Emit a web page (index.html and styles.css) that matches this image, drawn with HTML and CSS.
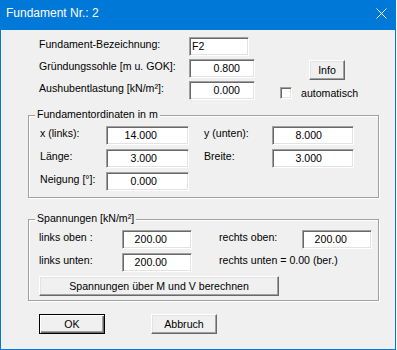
FILE: index.html
```html
<!DOCTYPE html>
<html lang="de">
<head>
    <meta charset="UTF-8">
    <title>Fundament Nr.: 2</title>
    <link rel="stylesheet" href="styles.css">
</head>
<body>
    <div class="window">
        <div class="titlebar">
            <span class="title">Fundament Nr.: 2</span>
            <svg class="close" width="11" height="11" viewBox="0 0 11 11">
                <path d="M0.5 0.5 L10.5 10.5 M10.5 0.5 L0.5 10.5" stroke="#fff" stroke-width="1" fill="none"/>
            </svg>
        </div>
        <div class="content">
            <!-- Kopfdaten -->
            <div class="head">
                <div class="fields">
                    <span class="lbl">Fundament-Bezeichnung:</span>
                    <div class="field txt short">F2</div>
                    <span class="lbl">Gründungssohle [m u. GOK]:</span>
                    <div class="field num top">0.800</div>
                    <span class="lbl">Aushubentlastung [kN/m²]:</span>
                    <div class="field num top">0.000</div>
                </div>
                <div class="side">
                    <button class="btn info">Info</button>
                    <div class="check">
                        <span class="box"></span>
                        <span>automatisch</span>
                    </div>
                </div>
            </div>

            <!-- Koordinaten -->
            <div class="group coords">
                <span class="legend">Fundamentordinaten in m</span>
                <div class="grid">
                    <span class="lbl">x (links):</span>
                    <div class="field num mid">14.000</div>
                    <span class="lbl second">y (unten):</span>
                    <div class="field num mid">8.000</div>
                    <span class="lbl">Länge:</span>
                    <div class="field num mid">3.000</div>
                    <span class="lbl second">Breite:</span>
                    <div class="field num mid">3.000</div>
                    <span class="lbl">Neigung [°]:</span>
                    <div class="field num mid">0.000</div>
                </div>
            </div>

            <!-- Spannungen -->
            <div class="group stress">
                <span class="legend">Spannungen [kN/m²]</span>
                <div class="grid">
                    <span class="lbl">links oben :</span>
                    <div class="field num low">200.00</div>
                    <span class="lbl second">rechts oben:</span>
                    <div class="field num low">200.00</div>
                    <span class="lbl">links unten:</span>
                    <div class="field num low">200.00</div>
                    <span class="lbl second wide">rechts unten = 0.00 (ber.)</span>
                </div>
                <button class="btn calc">Spannungen über M und V berechnen</button>
            </div>

            <div class="actions">
                <button class="btn default">OK</button>
                <button class="btn">Abbruch</button>
            </div>
        </div>
    </div>
</body>
</html>
```

FILE: styles.css
```css
* {
    box-sizing: border-box;
}
body {
    margin: 0;
    background: #fff;
    font-family: "Liberation Sans", Arial, sans-serif;
    font-size: 10.6px;
    color: #000;
}
.window {
    width: 396px;
    height: 350px;
    border: 1px solid #0078d7;
    background: #f0f0f0;
}
.titlebar {
    height: 29px;
    background: #0078d7;
    color: #fff;
    display: flex;
    align-items: flex-start;
    padding: 5px 8px 0 5px;
    font-size: 12px;
    line-height: 14px;
}
.close {
    margin-left: auto;
    margin-top: 2px;
}
.content {
    padding: 7px 0 0 27px;
}
.head {
    display: flex;
    padding-left: 11px;
}
.fields {
    display: grid;
    grid-template-columns: 150px auto;
    row-gap: 3px;
    align-items: start;
}
.lbl {
    line-height: 13px;
    padding-top: 1px;
    white-space: nowrap;
}
.field {
    height: 19px;
    background: #fff;
    border: 1px solid;
    border-color: #a0a0a0 #fff #fff #a0a0a0;
    box-shadow: inset 1px 1px #696969, inset -1px -1px #e3e3e3;
    line-height: 16px;
    white-space: nowrap;
}
.field.txt {
    padding-left: 2px;
}
.field.short {
    width: 60px;
}
.field.num {
    text-align: right;
}
.field.top {
    width: 66px;
    padding-right: 14px;
}
.field.mid {
    padding-right: 31px;
}
.field.low {
    padding-right: 24px;
}
.side {
    margin-left: 25px;
    padding-top: 23px;
    display: flex;
    flex-direction: column;
    align-items: flex-start;
}
.btn {
    height: 20px;
    padding: 0;
    background: #f0f0f0;
    font-family: inherit;
    font-size: 10.6px;
    color: #000;
    border: 1px solid;
    border-color: #fff #696969 #696969 #fff;
    box-shadow: inset -1px -1px #a0a0a0, inset 1px 1px #e3e3e3;
}
.btn.info {
    width: 36px;
    margin-left: 29px;
}
.check {
    display: flex;
    align-items: center;
    gap: 9px;
    margin-top: 7px;
}
.check .box {
    width: 12px;
    height: 12px;
    background: #fff;
    border: 1px solid;
    border-color: #a0a0a0 #fff #fff #a0a0a0;
    box-shadow: inset 1px 1px #696969, inset -1px -1px #e3e3e3;
}
.group {
    position: relative;
    width: 351px;
    border: 1px solid #a0a0a0;
    box-shadow: inset 1px 1px #fff, 1px 1px #fff;
}
.legend {
    position: absolute;
    top: -8px;
    left: 6px;
    padding: 0 2px;
    line-height: 13px;
    background: #f0f0f0;
}
.group .grid {
    display: grid;
    row-gap: 4px;
    align-items: start;
}
.coords {
    height: 83px;
    margin-top: 15px;
    padding: 10px 0 0 11px;
}
.coords .grid {
    grid-template-columns: 66px 83px 83px 82px;
}
.coords .second {
    padding-left: 15px;
}
.stress {
    height: 82px;
    margin-top: 21px;
    padding: 10px 0 0 10px;
}
.stress .grid {
    grid-template-columns: 83px 70px 110px 70px;
}
.stress .second {
    padding-left: 27px;
}
.stress .wide {
    grid-column: span 2;
}
.btn.calc {
    display: block;
    width: 240px;
    margin-top: 4px;
}
.actions {
    display: flex;
    gap: 46px;
    margin-top: 13px;
    padding-left: 11px;
}
.actions .btn {
    width: 66px;
}
.btn.default {
    border: 1px solid #000;
    box-shadow: inset 1px 1px #fff, inset -1px -1px #696969, inset -2px -2px #a0a0a0;
}
```
